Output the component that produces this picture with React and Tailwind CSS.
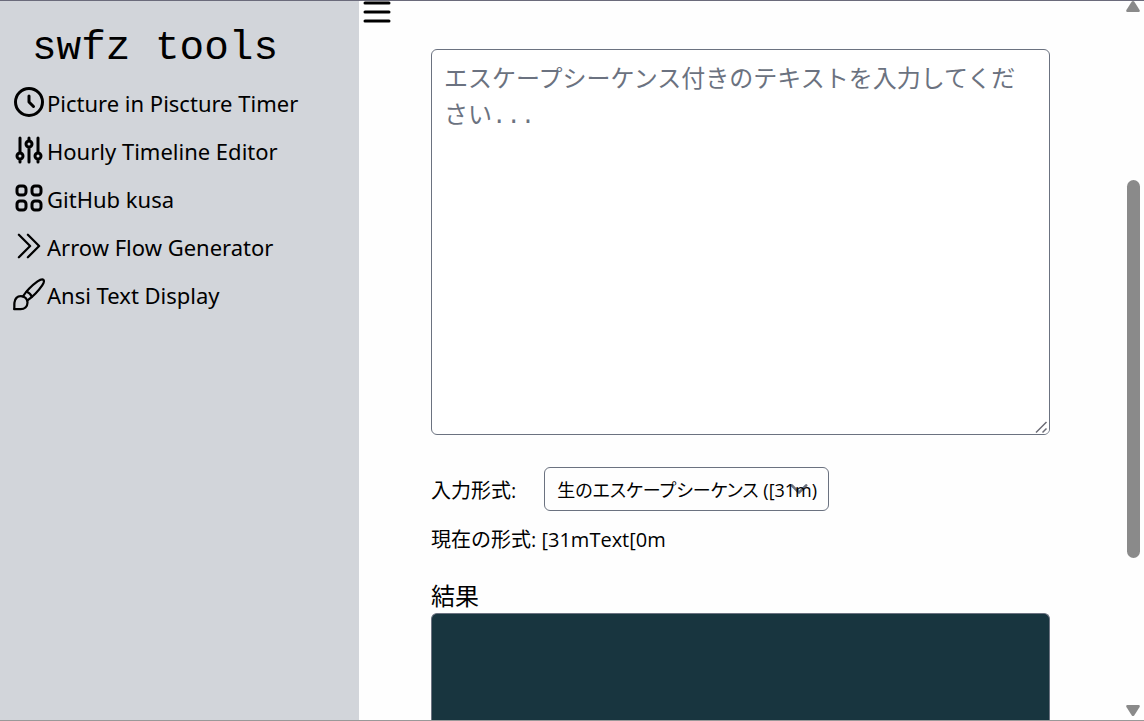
import { useState } from "react";
import {
  HiOutlineAdjustments,
  HiOutlineClock,
  HiOutlineMenu,
  HiOutlineViewGrid,
} from "react-icons/hi";
import { HiOutlineChevronDoubleRight } from "react-icons/hi2";

function BrushIcon(props) {
  return (
    <svg
      viewBox="0 0 24 24"
      fill="none"
      stroke="currentColor"
      strokeWidth="1.5"
      strokeLinecap="round"
      strokeLinejoin="round"
      {...props}
    >
      <path d="M2.1 22.1C2.4 21 2.1 19.6 2.3 17.8 2.6 15.2 4.2 13.4 6.6 13.4 9.2 13.4 11 15.3 11 17.7 11 20.4 9 22.1 6.4 22.1Z" />
      <path d="M8 13.5C10.4 9.9 13.8 6.4 17.7 3.6 19.5 2.4 21.1 2.1 21.6 2.6 22.2 3.2 21.9 4.6 20.8 6.2 18.2 10 14.8 13.5 11 16.2" />
      <path d="M10.5 10.5Q13 11.4 13.8 13.8" />
    </svg>
  );
}

const tools = [
  { name: "Picture in Piscture Timer", Icon: HiOutlineClock },
  { name: "Hourly Timeline Editor", Icon: HiOutlineAdjustments },
  { name: "GitHub kusa", Icon: HiOutlineViewGrid },
  { name: "Arrow Flow Generator", Icon: HiOutlineChevronDoubleRight },
  { name: "Ansi Text Display", Icon: BrushIcon },
];

const formats = {
  raw: { label: "生のエスケープシーケンス ([31m)", sample: "[31mText[0m" },
  escaped: { label: "エスケープ表記 (\\x1b[31m)", sample: "\\x1b[31mText\\x1b[0m" },
};

function Sidebar() {
  return (
    <aside className="w-[359px] shrink-0 bg-[#d2d5da]">
      <h1 className="px-8 pt-[22px] pb-1.5 font-['Liberation_Mono',monospace] text-[41px] leading-[50px]">
        swfz tools
      </h1>
      <nav>
        <ul>
          {tools.map(({ name, Icon }) => (
            <li key={name}>
              <a href="#" className="flex h-12 items-center pl-[11px]">
                <Icon className="size-9 shrink-0 -translate-y-px" aria-hidden="true" />
                <span className="font-['Noto_Sans',sans-serif] text-[22px] leading-9">{name}</span>
              </a>
            </li>
          ))}
        </ul>
      </nav>
    </aside>
  );
}

function ScrollTrack() {
  return (
    <div className="flex w-[22px] shrink-0 flex-col items-center" aria-hidden="true">
      <svg className="h-3 w-4 shrink-0" viewBox="0 0 16 12" fill="#8a8a8a">
        <path d="M6.8.6Q8-.6 9.2.6L14.6 9Q15.3 11 13.6 11H2.4Q.7 11 1.4 9Z" />
      </svg>
      <div className="flex w-full flex-1 flex-col items-center">
        <div className="grow-[167]" />
        <div className="w-[13px] grow-[378] rounded-full bg-[#8a8a8a]" />
        <div className="grow-[146]" />
      </div>
      <svg className="mb-1 h-3 w-4 shrink-0" viewBox="0 0 16 12" fill="#8a8a8a">
        <path d="M6.8 11.4Q8 12.6 9.2 11.4L14.6 3Q15.3 1 13.6 1H2.4Q.7 1 1.4 3Z" />
      </svg>
    </div>
  );
}

export default function App() {
  const [text, setText] = useState("");
  const [format, setFormat] = useState("raw");

  return (
    <div className="flex h-screen overflow-hidden border-t border-b border-t-[#6b6b7b] border-b-[#999999] bg-[#fefefe] font-['Open_Sans','Noto_Sans_CJK_JP',sans-serif] text-black">
      <Sidebar />
      <main className="flex min-w-0 flex-1 flex-col overflow-hidden">
        <button type="button" aria-label="メニュー" className="-mt-[7px] size-9 shrink-0">
          <HiOutlineMenu className="size-9" aria-hidden="true" />
        </button>
        <div className="flex flex-1 flex-col px-[72px] pt-[19px]">
          <div className="relative shrink-0">
            <textarea
              aria-label="テキスト"
              value={text}
              onChange={(e) => setText(e.target.value)}
              placeholder="エスケープシーケンス付きのテキストを入力してください..."
              className="block h-[386px] w-full resize-y rounded-md border border-[#6b7280] bg-white px-3 py-[13px] font-['Liberation_Mono','Noto_Sans_CJK_JP',monospace] text-2xl leading-9 placeholder:text-[#6b7280]"
            />
            <svg
              className="pointer-events-none absolute right-px bottom-px size-3.5 rounded-br-[5px] bg-white"
              viewBox="0 0 14 14"
              stroke="#6b6b75"
              strokeWidth="1.5"
              aria-hidden="true"
            >
              <path d="M1 12.5L11.5 2M7.5 12.5L11.5 8.5" />
            </svg>
          </div>
          <div className="mt-8 flex shrink-0 items-center gap-7 text-xl">
            <label htmlFor="format" className="pt-1">
              入力形式:
            </label>
            <div className="relative">
              <svg
                className="pointer-events-none absolute top-1 right-3 size-9"
                viewBox="0 0 20 20"
                fill="none"
                stroke="#6b7280"
                strokeWidth="1.5"
                strokeLinecap="round"
                strokeLinejoin="round"
                aria-hidden="true"
              >
                <path d="M6 8l4 4 4-4" />
              </svg>
              <select
                id="format"
                value={format}
                onChange={(e) => setFormat(e.target.value)}
                className="relative block h-11 w-[285px] appearance-none rounded-md border border-[#6b7280] bg-transparent pt-0.5 pl-3 text-lg [font-feature-settings:'palt']"
              >
                {Object.entries(formats).map(([key, { label }]) => (
                  <option key={key} value={key}>
                    {label}
                  </option>
                ))}
              </select>
            </div>
          </div>
          <p className="mt-3 shrink-0 text-xl leading-[34px]">
            現在の形式: {formats[format].sample}
          </p>
          <h2 className="mt-[22px] shrink-0 text-2xl leading-[34px]">結果</h2>
          <output className="block min-h-[108px] flex-1 shrink-0 rounded-t-md border border-b-0 border-[#6b7280] bg-[#18353f] p-3 text-white">
            {text}
          </output>
        </div>
      </main>
      <ScrollTrack />
    </div>
  );
}
